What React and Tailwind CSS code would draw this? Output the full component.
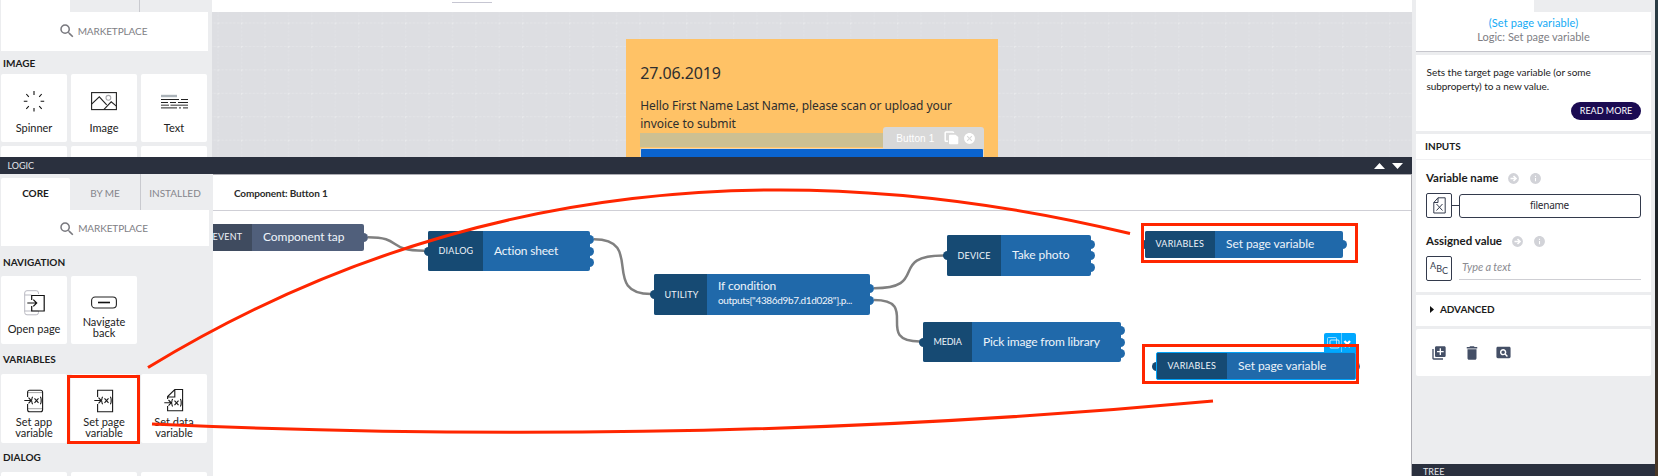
import React from 'react';
import { MdSearch, MdLibraryAdd, MdDelete, MdPageview, MdInfo, MdCancel } from 'react-icons/md';

function Tile({ icon, lines, className = 'h-[68px]' }) {
  return (
    <div className={`flex w-[66px] shrink-0 flex-col items-center rounded-[2px] bg-white text-[11px] text-[#222222] ${className}`}>
      {icon}
      {lines && (
        <div className="text-center leading-[11px]">
          {lines.map((l) => (
            <div key={l}>{l}</div>
          ))}
        </div>
      )}
    </div>
  );
}

function Heading({ children, className }) {
  return (
    <div className={`flex shrink-0 items-center pl-[2px] text-[10px] font-bold text-[#1b1b1b] ${className}`}>{children}</div>
  );
}

function Marketplace({ className }) {
  return (
    <div className={`flex w-full shrink-0 items-center justify-center gap-[2px] bg-white pr-[4px] text-[10px] tracking-[-0.01em] text-[#7e7e84] ${className}`}>
      <MdSearch className="size-[18px] text-[#78787e]" />
      MARKETPLACE
    </div>
  );
}

const SpinnerIcon = () => (
  <svg className="mt-[16px] mb-[9px] h-[23px] w-[22px]" viewBox="0 0 22 23" stroke="#111" strokeWidth="1.1">
    <path d="M11 1v4M11 18v3.5M.8 11.3h3.6M17.6 11.3h3.6M3.3 4l2.5 2.8M18.7 4l-2.5 2.8M3.3 18.8l2.5-2.6M18.7 18.8l-2.5-2.6" />
  </svg>
);
const ImageIcon = () => (
  <svg className="mt-[17px] mb-[10px] h-[21px] w-[26px]" viewBox="0 0 26 21" fill="none" stroke="#222" strokeWidth="1.1">
    <rect x=".6" y="1.6" width="24.8" height="17" />
    <path d="M.6 13.2 8.3 5.8l7.4 8M13 18.4l7.2-7.6 5.2 4.4" />
    <circle cx="17.4" cy="6.8" r="2.4" stroke="#a8a8ac" />
  </svg>
);
const TextIcon = () => (
  <svg className="mt-[17px] mb-[10px] h-[21px] w-[27px]" viewBox="0 0 27 21" fill="none" stroke="#222" strokeWidth="1">
    <path d="M0 5h16" stroke="#aab2b8" strokeWidth="2.4" />
    <path d="M0 8.5h18M20 8.5h7M0 11.5h7M9 11.5h6M17 11.5h10M0 16.9h16M18 16.9h2M22 16.9h5" />
    <path d="M0 14.2h8M9.500 14.2h17.500" stroke="#777" strokeWidth="1.6" />
  </svg>
);
const OpenPageIcon = () => (
  <svg className="mt-[14px] mb-[7px] h-[26px] w-[21px]" viewBox="0 0 21 26" fill="none">
    <path d="M14.500 4V3a2.300 2.300 0 0 0-2.300-2.300H3A2.300 2.300 0 0 0 .7 3v19.500A2.300 2.300 0 0 0 3 24.800h9.200a2.300 2.300 0 0 0 2.300-2.300V21M.7 5h7M.7 21h13.800" stroke="#b9b9c2" strokeWidth="1" />
    <path d="M7.700 10V5.500H20.200V21H7.700V16M3.300 13h9M9.300 9.600l3.400 3.400-3.400 3.400" stroke="#111" strokeWidth="1.200" />
  </svg>
);
const BackIcon = () => (
  <svg className="mt-[20px] mb-[7px] h-[13px] w-[26px]" viewBox="0 0 26 13" fill="none">
    <rect x=".6" y="1" width="24.800" height="11" rx="3.500" stroke="#222" strokeWidth="1.100" />
    <path d="M7 6.500h12" stroke="#111" strokeWidth="1.600" />
  </svg>
);
function VarIcon({ kind }) {
  return (
    <svg className="mt-[14px] mb-[3px] h-[25px] w-[20px]" viewBox="0 0 20 25" fill="none" stroke="#1a1a1a" strokeWidth="1.100">
      {kind === 'app' && (
        <>
          <path d="M3.600 4.600h15M3.600 20.700h15" stroke="#999" strokeWidth=".9" />
          <path d="M3.600 9V4.300a2 2 0 0 1 2-2h11a2 2 0 0 1 2 2v17.500a2 2 0 0 1-2 2h-11a2 2 0 0 1-2-2V16" />
        </>
      )}
      {kind === 'page' && <path d="M3.600 9V2.300h15v21.500h-15V16" />}
      {kind === 'data' && <path d="M3.600 11V8.500L10.800 1.500h7.800v21.300h-15V18M3.600 9h7.200V1.500" />}
      <g transform={kind === 'data' ? 'translate(0 2.300)' : undefined}>
        <path d="M.3 12.500h6.500M4.500 9.700l2.700 2.800-2.700 2.800M9 9q-1 0-1 1.200 0 2.300-.9 2.300.9 0 .9 2.300Q8 16 9 16M16 9q1.200 0 1.200 3.500T16 16M10.500 10.300l4 4.600M14.500 10.300l-4 4.600" />
      </g>
    </svg>
  );
}

function TopArea() {
  return (
    <div className="flex h-[157px] shrink-0 overflow-hidden">
      <div className="flex w-[212px] shrink-0 flex-col bg-[#ecedef] pr-[4px] pl-px">
        <div className="flex h-[12px] shrink-0">
          <div className="w-[69px] bg-white" />
          <div className="w-[70px] border-r border-[#c9cacf]" />
        </div>
        <Marketplace className="h-[39px] pb-px" />
        <Heading className="h-[23px] pt-[2px]">IMAGE</Heading>
        <div className="flex gap-[4px]">
          <Tile icon={<SpinnerIcon />} lines={['Spinner']} />
          <Tile icon={<ImageIcon />} lines={['Image']} />
          <Tile icon={<TextIcon />} lines={['Text']} />
        </div>
        <div className="mt-[4px] flex gap-[4px]">
          <Tile />
          <Tile />
          <Tile />
        </div>
      </div>
      <div className="flex min-w-0 flex-1 flex-col">
        <div className="h-[12px] shrink-0 bg-white pt-[2px] pl-[240px]">
          <div className="h-px w-[40px] bg-[#c6c6d2]" />
        </div>
        <div className="relative flex flex-1 justify-center overflow-hidden bg-[#dddee2] pt-[27px]">
          <svg className="absolute inset-0 size-full" fill="none">
            <defs>
              <pattern id="grid" x="5.500" y="10.500" width="23.430" height="23.430" patternUnits="userSpaceOnUse">
                <path d="M0 .5H23.430" stroke="#e3e4e7" strokeWidth="1" strokeDasharray="2.500 1.400" />
                <path d="M.5 0V23.430" stroke="#e0e1e5" strokeWidth="1" strokeDasharray="2.500 1.400" />
                <path d="M0 .5h2M.5 0v2" stroke="#e9eaec" strokeWidth="1" />
              </pattern>
            </defs>
            <rect width="1200" height="160" fill="url(#grid)" />
          </svg>
          <div className="relative mr-[-0.500px] h-[140px] w-[372px] bg-[#ffc266] px-[14px] font-['Noto_Sans'] text-[#2e2e2e]">
            <div className="mt-[22px] text-[16px] leading-[24px] tracking-[-0.008em]">27.06.2019</div>
            <div className="mt-[12px] text-[12px] leading-[18px] tracking-[-0.005em] whitespace-nowrap">
              Hello First Name Last Name, please scan or upload your
              <br />
              invoice to submit
            </div>
            <div className="h-[14px] bg-[#cdc092]" />
            <div className="mt-[1px] h-[12px] rounded-t-[2px] border border-b-0 border-[#e8d9c0] bg-[#0a63ce]" />
            <div className="absolute top-[88px] right-[14px] flex h-[22px] w-[101px] items-center rounded-t-[3px] bg-[#d8d8d8] pl-[13px] font-['Liberation_Sans'] text-[10px] text-white">
              <span className="tracking-[0.01em]">Button 1</span>
              <svg className="ml-[10px] h-[14px] w-[15px]" viewBox="0 0 15 14">
                <path d="M9.500 2V1.800A.8.800 0 0 0 8.700 1H2a.8.800 0 0 0-.8.800V9.500a.8.800 0 0 0 .8.800H4" fill="none" stroke="#fff" strokeWidth="1.500" />
                <path d="M6 3.800h5.500L14.300 6v6.300a1 1 0 0 1-1 1H6a1 1 0 0 1-1-1V4.800a1 1 0 0 1 1-1z" fill="#fff" />
              </svg>
              <MdCancel className="ml-[4px] size-[13px]" />
            </div>
          </div>
        </div>
      </div>
    </div>
  );
}

function LogicSidebar() {
  return (
    <div className="flex w-[213px] shrink-0 flex-col bg-[#ecedef] pr-[4px] pl-px">
      <div className="flex h-[36px] shrink-0 text-[10px] text-[#85858b]">
        <div className="mt-[4px] flex w-[69px] items-center justify-center rounded-t-[2px] bg-white pb-[2px] font-bold text-[#1b1b1b]">CORE</div>
        <div className="flex w-[71px] items-center justify-center border-r border-[#c9cacf] pt-[2px]">BY ME</div>
        <div className="flex flex-1 items-center justify-center pt-[2px]">INSTALLED</div>
      </div>
      <Marketplace className="h-[36px] pt-px" />
      <Heading className="h-[30px] pt-[2px]">NAVIGATION</Heading>
      <div className="flex gap-[4px]">
        <Tile icon={<OpenPageIcon />} lines={['Open page']} />
        <Tile icon={<BackIcon />} lines={['Navigate', 'back']} />
      </div>
      <Heading className="h-[30px] pt-px">VARIABLES</Heading>
      <div className="flex gap-[4px]">
        <Tile className="h-[69px]" icon={<VarIcon kind="app" />} lines={['Set app', 'variable']} />
        <Tile className="h-[69px]" icon={<VarIcon kind="page" />} lines={['Set page', 'variable']} />
        <Tile className="h-[69px]" icon={<VarIcon kind="data" />} lines={['Set data', 'variable']} />
      </div>
      <Heading className="h-[29px]">DIALOG</Heading>
      <div className="flex gap-[4px]">
        <Tile />
        <Tile />
        <Tile />
      </div>
    </div>
  );
}

/* A flow block: kind label, title and connector ports. */
function Node({ pos, kind, kindWidth, title, sub, inPort, outPorts = [], dark = 'bg-[#164a73]', main = 'bg-[#2069aa]', frame = '' }) {
  return (
    <div className={`absolute flex rounded-[2px] text-[#eef4fa] ${pos}`}>
      {inPort && <span className={`absolute left-[-4px] size-[9px] rounded-full ${dark} ${inPort}`} />}
      {outPorts.map((p) => (
        <span key={p} className={`absolute right-[-4px] size-[9px] rounded-full ${main} ${p}`} />
      ))}
      <div className={`relative flex size-full overflow-hidden rounded-[2px] ${main} ${frame}`}>
        <div className={`flex h-full shrink-0 items-center pl-[10.500px] text-[9px] tracking-[0.025em] ${dark} ${kindWidth}`}>{kind}</div>
        <div className="flex flex-col justify-center pl-[11px] text-[12px] leading-[14px] tracking-[-0.005em] whitespace-nowrap">
          <div>{title}</div>
          {sub && <div className="mb-[3px] text-[10px] tracking-[-0.036em]">{sub}</div>}
        </div>
      </div>
    </div>
  );
}

function Flow() {
  return (
    <div className="relative flex-1 overflow-hidden">
      <svg className="absolute inset-0 h-full w-[1200px]" fill="none" stroke="#808080" strokeWidth="2.500">
        <g transform="translate(-213 -211)">
          <path d="M368 237.300C403 237.300 386 250.700 424 250.700" />
          <path d="M594 239.300C645 239.300 600 294 651 294" />
          <path d="M874 288.200C930 288.200 887 255.500 944 255.500" />
          <path d="M874 300C921 300 873 341.500 920 341.500" />
        </g>
      </svg>
      <Node pos="left-[-36px] top-[12.500px] h-[27px] w-[187px]" kind={<span className="ml-[25px]">EVENT</span>} kindWidth="w-[75px]" title="Component tap" outPorts={['top-[9.500px]']} dark="bg-[#3f4b5f]" main="bg-[#505f7b]" />
      <Node pos="left-[215px] top-[19.500px] h-[40.500px] w-[162px]" kind="DIALOG" kindWidth="w-[55px]" title={<span className="tracking-[-0.015em]">Action sheet</span>} inPort="top-[16px]" outPorts={['top-[4.500px]', 'top-[16px]', 'top-[27.500px]']} />
      <Node pos="left-[441px] top-[63px] h-[40.500px] w-[216px]" kind="UTILITY" kindWidth="w-[53px]" title={<span className="tracking-[-0.010em]">If condition</span>} sub={'outputs["4386d9b7.d1d028"].p...'} inPort="top-[16px]" outPorts={['top-[10px]', 'top-[21.500px]']} />
      <Node pos="left-[734px] top-[24px] h-[40.500px] w-[144px]" kind="DEVICE" kindWidth="w-[54px]" title="Take photo" inPort="top-[16px]" outPorts={['top-[4.500px]', 'top-[16px]', 'top-[27.500px]']} />
      <Node pos="left-[710px] top-[110.500px] h-[40.500px] w-[198px]" kind={<span className="tracking-[-0.020em]">MEDIA</span>} kindWidth="w-[49px]" title={<span className="tracking-[-0.014em]">Pick image from library</span>} inPort="top-[16px]" outPorts={['top-[4.500px]', 'top-[16px]', 'top-[27.500px]']} />
      <Node pos="left-[932px] top-[19.500px] h-[27px] w-[198px]" kind="VARIABLES" kindWidth="w-[70px]" title="Set page variable" inPort="top-[9px]" outPorts={['top-[9px]']} />
      <div className="absolute top-[122px] left-[1111px] flex h-[20px] w-[32px] rounded-t-[2px] bg-[#00a8ff] text-white">
        <svg className="size-full" viewBox="0 0 32 20" fill="none" stroke="#fff">
          <rect x="3.500" y="4.500" width="9" height="8" rx="1" strokeOpacity=".6" />
          <rect x="6" y="7" width="9" height="8" rx="1" strokeOpacity=".8" />
          <path d="M17.500 0v20" strokeOpacity=".4" />
          <path d="m20.500 8 5.500 6M26 8l-5.500 6" strokeWidth="2.300" />
        </svg>
      </div>
      <Node pos="left-[943px] top-[141px] h-[28px] w-[200px]" kind="VARIABLES" kindWidth="w-[70px]" title="Set page variable" inPort="top-[10px]" outPorts={['top-[10px]']} frame="border border-[#00a2f8]" />
    </div>
  );
}

function Field({ label, icon, children }) {
  return (
    <div>
      <div className="flex items-center text-[11.5px] leading-[14px] font-bold text-[#1b1b1b]">
        {label}
        <svg className="ml-[10px] size-[11px]" viewBox="0 0 11 11">
          <circle cx="5.500" cy="5.500" r="5.400" fill="#d2d3d8" />
          <path d="M2.500 5.500h5M5.500 3l2.600 2.500L5.500 8" fill="none" stroke="#fff" strokeWidth="1.500" />
        </svg>
        <MdInfo className="ml-[10px] size-[13px] text-[#d2d3d8]" />
      </div>
      <div className="mt-[8px] flex items-center">
        <div className="flex h-[25px] w-[26px] shrink-0 items-center justify-center rounded-[2px] border border-[#333a4c]">{icon}</div>
        {children}
      </div>
    </div>
  );
}

function Inspector() {
  return (
    <div className="flex w-[243px] shrink-0 flex-col bg-[#ecedef]">
      <div className="flex flex-1 flex-col pr-[4px] pl-[4px]">
        <div className="h-[12px] shrink-0">
          <div className="h-full w-[118px] bg-white" />
        </div>
        <div className="flex h-[40px] shrink-0 flex-col items-center border-b border-[#c6c6cc] bg-white pt-[4px] text-[11px] leading-[14px] text-[#7e7e84]">
          <div className="tracking-[0.010em] text-[#14aaf5]">(Set page variable)</div>
          <div>Logic: Set page variable</div>
        </div>
        <div className="mt-[3px] flex h-[76px] shrink-0 flex-col bg-white pt-[10px] pr-[10px] pl-[10.500px] text-[10px] leading-[14px] whitespace-nowrap text-[#222222]">
          <div>Sets the target page variable (or some</div>
          <div className="tracking-[-0.006em]">subproperty) to a new value.</div>
          <div className="mt-[9px] flex h-[18px] w-[70px] items-center justify-center self-end rounded-full bg-[#1b0b52] text-[9px] text-white">READ MORE</div>
        </div>
        <div className="mt-[3px] flex h-[158px] shrink-0 flex-col bg-white">
          <div className="flex h-[26px] items-center border-b border-[#f0f0f2] pb-px pl-[9px] text-[10px] text-[#1b1b1b]">
            <span className="font-bold">INPUTS</span>
          </div>
          <div className="flex flex-col gap-[16px] pt-[11px] pr-[10px] pl-[10px]">
            <Field
              label="Variable name"
              icon={
                <svg className="h-[17px] w-[13px]" viewBox="0 0 13 17" fill="none" stroke="#333a4c" strokeWidth="1">
                  <path d="M.8 5.500 5 .8h7.200v15.200H.8zM.8 5.500H5V.8M3.500 7l6 6.500M9.500 7l-6 6.500" />
                </svg>
              }
            >
              <div className="h-px w-[7px] bg-[#333a4c]" />
              <div className="flex h-[24px] flex-1 items-center justify-center rounded-[3px] border border-[#333a4c] pr-px font-['Noto_Sans'] text-[10px] tracking-[-0.025em] text-[#2b2b33]">filename</div>
            </Field>
            <Field
              label="Assigned value"
              icon={
                <div className="flex text-[9px] leading-[10px] text-[#333a4c]">
                  <span className="-translate-y-[3px]">A</span>
                  <span>B</span>
                  <span className="translate-y-[2px]">C</span>
                </div>
              }
            >
              <div className="ml-[7px] flex h-[23px] flex-1 items-center border-b border-[#cfcfd4] pb-[2px] pl-[3px] text-[11px] tracking-[-0.011em] text-[#8b8b91] italic">Type a text</div>
            </Field>
          </div>
        </div>
        <div className="mt-[3px] flex h-[31px] shrink-0 items-center gap-[6px] bg-white pb-[2px] pl-[14px] text-[10px] text-[#1b1b1b]">
          <svg className="h-[7px] w-[4px]" viewBox="0 0 4 7">
            <path d="M0 0 4 3.500 0 7z" fill="#111" />
          </svg>
          <span className="font-bold tracking-[-0.010em]">ADVANCED</span>
        </div>
        <div className="mt-[3px] flex h-[47px] shrink-0 items-center rounded-[2px] bg-white pl-[15px] text-[#444f66]">
          <MdLibraryAdd className="size-[16px]" />
          <MdDelete className="ml-[16px] size-[18px]" />
          <MdPageview className="ml-[14px] size-[17px]" />
        </div>
      </div>
      <div className="flex h-[12px] shrink-0 items-end bg-[#2a303e] pl-[11px] text-[9px] leading-[8px] text-[#e4e6ea]">TREE</div>
    </div>
  );
}

export default function App() {
  return (
    <div className="relative flex h-[476px] w-[1658px] overflow-hidden bg-[#ecedef] font-['Lato',sans-serif]">
      <div className="flex w-[1412px] shrink-0 flex-col">
        <TopArea />
        <div className="flex h-[17px] shrink-0 items-center bg-[#2a303e] pl-[7.500px] text-[9px] text-[#e4e6ea]">
          <span className="pt-px">LOGIC</span>
          <svg className="ml-auto mr-[9px] h-[6px] w-[29px]" viewBox="0 0 29 6" fill="#fff">
            <path d="M0 6 5.500 0 11 6zM18 0h11l-5.500 6z" />
          </svg>
        </div>
        <div className="flex min-h-0 flex-1">
          <LogicSidebar />
          <div className="flex min-w-0 flex-1 flex-col border-t border-r border-[#acacb2] bg-white">
            <div className="flex h-[36px] shrink-0 items-center border-b border-[#cfcfd6] pt-px pl-[21px] text-[10px] font-bold tracking-[-0.015em] text-[#2b2b2b]">Component: Button 1</div>
            <Flow />
          </div>
        </div>
      </div>
      <Inspector />
      <div className="flex-1 bg-linear-to-b from-[#2b3d45] via-[#1b2025] to-[#4a3826]" />

      {/* Annotation marks drawn over the whole screen */}
      <svg className="pointer-events-none absolute inset-0" width="1658" height="476" fill="none" stroke="#ff2600" strokeWidth="3">
        <path d="M148 367.500Q584 102 1130 233.500" />
        <path d="M152 424Q700 448.500 1213 401" />
        <rect x="68.500" y="376.500" width="70" height="66" />
        <rect x="1142.500" y="224.500" width="214" height="37" />
        <rect x="1143.500" y="345.500" width="214" height="37" />
      </svg>
    </div>
  );
}
